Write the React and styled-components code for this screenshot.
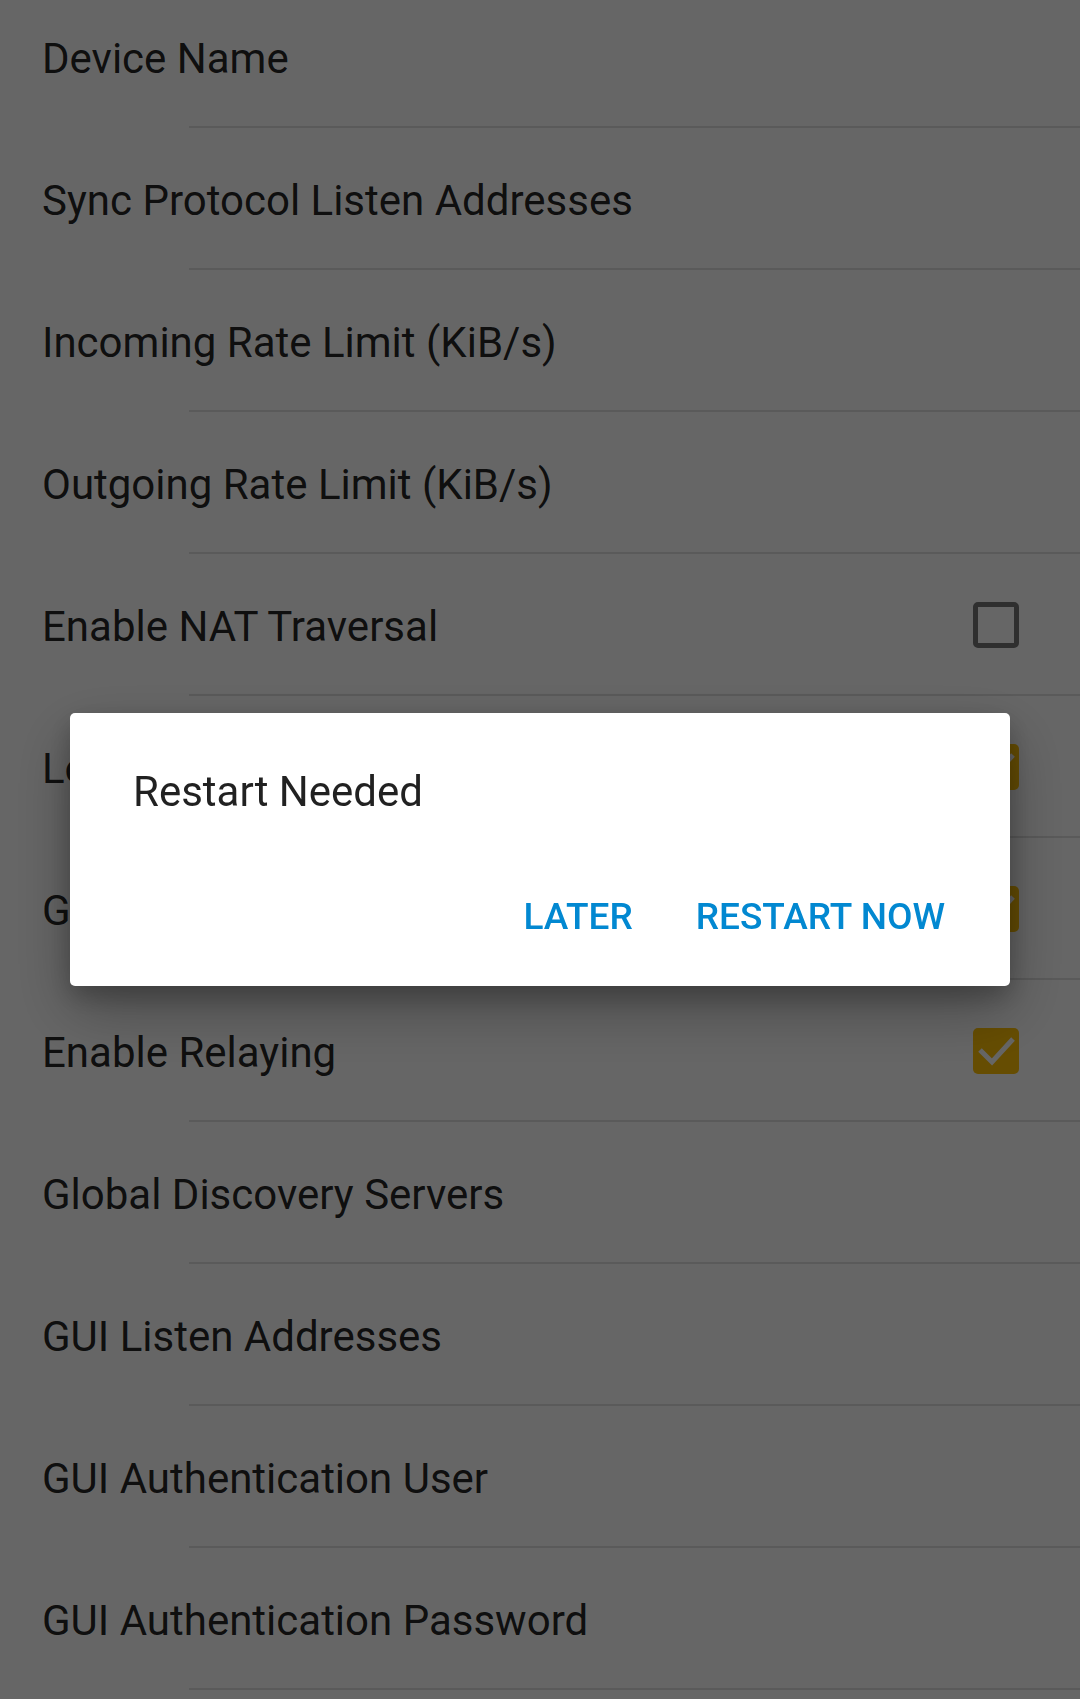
import React from "react";
import styled, { createGlobalStyle } from "styled-components";

const Global = createGlobalStyle`
  html, body {
    margin: 0;
    padding: 0;
    background: #ffffff;
    overflow: hidden;
  }
  body {
    font-family: Roboto, "Noto Sans", "Liberation Sans", sans-serif;
    -webkit-font-smoothing: antialiased;
  }
`;

const Screen = styled.div`
  width: 1080px;
  height: 1699px;
  overflow: hidden;
  background: #ffffff;
`;

const List = styled.div`
  display: flex;
  flex-direction: column;
  margin-top: -14px;
`;

const Row = styled.div`
  position: relative;
  height: 142px;
  display: flex;
  align-items: center;
  justify-content: space-between;
  padding: 0 61px 0 42px;
  box-sizing: border-box;
  &::after {
    content: "";
    position: absolute;
    left: 189px;
    right: 0;
    bottom: 0;
    height: 2px;
    background: #e0e0e0;
  }
`;

const Label = styled.span`
  font-size: 42px;
  color: rgba(0, 0, 0, 0.87);
  line-height: 50px;
  padding-top: 4px;
`;

const Box = styled.span`
  width: 46px;
  height: 46px;
  box-sizing: border-box;
  border-radius: 5px;
  display: flex;
  align-items: center;
  justify-content: center;
  border: ${(p) => (p.$checked ? "none" : "5px solid rgba(0,0,0,0.54)")};
  background: ${(p) => (p.$checked ? "#FFC107" : "transparent")};
`;

const Scrim = styled.div`
  position: fixed;
  inset: 0;
  background: rgba(0, 0, 0, 0.6);
  display: flex;
  align-items: center;
  justify-content: center;
`;

const Dialog = styled.div`
  width: 940px;
  height: 273px;
  box-sizing: border-box;
  background: #ffffff;
  border-radius: 5px;
  box-shadow: 0 24px 60px rgba(0, 0, 0, 0.3), 0 10px 24px rgba(0, 0, 0, 0.22);
  display: flex;
  flex-direction: column;
  justify-content: space-between;
  padding: 54px 44px 23px 0;
`;

const Title = styled.div`
  font-size: 42px;
  line-height: 50px;
  color: rgba(0, 0, 0, 0.87);
  padding-left: 63px;
`;

const Actions = styled.div`
  display: flex;
  justify-content: flex-end;
  gap: 21px;
`;

const TextButton = styled.button`
  height: 94px;
  padding: 0 21px;
  border: none;
  background: transparent;
  font-family: Roboto, "Noto Sans", "Liberation Sans", sans-serif;
  font-weight: 500;
  font-size: 37px;
  letter-spacing: 0;
  color: #0288d1;
  text-transform: uppercase;
  line-height: 43px;
  cursor: pointer;
`;

const Check = () => (
  <svg width="46" height="46" viewBox="0 0 46 46">
    <path d="M7 22 L19 34 L40 11" fill="none" stroke="#ffffff" strokeWidth="5" />
  </svg>
);

const rows = [
  { label: "Device Name" },
  { label: "Sync Protocol Listen Addresses" },
  { label: "Incoming Rate Limit (KiB/s)" },
  { label: "Outgoing Rate Limit (KiB/s)" },
  { label: "Enable NAT Traversal", checkbox: true, checked: false },
  { label: "Local Discovery", checkbox: true, checked: true },
  { label: "Global Discovery", checkbox: true, checked: true },
  { label: "Enable Relaying", checkbox: true, checked: true },
  { label: "Global Discovery Servers" },
  { label: "GUI Listen Addresses" },
  { label: "GUI Authentication User" },
  { label: "GUI Authentication Password" },
  { label: "Use HTTPS for GUI", checkbox: true, checked: false },
];

export default function App() {
  return (
    <>
      <Global />
      <Screen>
        <List>
          {rows.map((r) => (
            <Row key={r.label}>
              <Label>{r.label}</Label>
              {r.checkbox && <Box $checked={r.checked}>{r.checked && <Check />}</Box>}
            </Row>
          ))}
        </List>
      </Screen>
      <Scrim>
        <Dialog>
          <Title>Restart Needed</Title>
          <Actions>
            <TextButton>Later</TextButton>
            <TextButton>Restart Now</TextButton>
          </Actions>
        </Dialog>
      </Scrim>
    </>
  );
}
